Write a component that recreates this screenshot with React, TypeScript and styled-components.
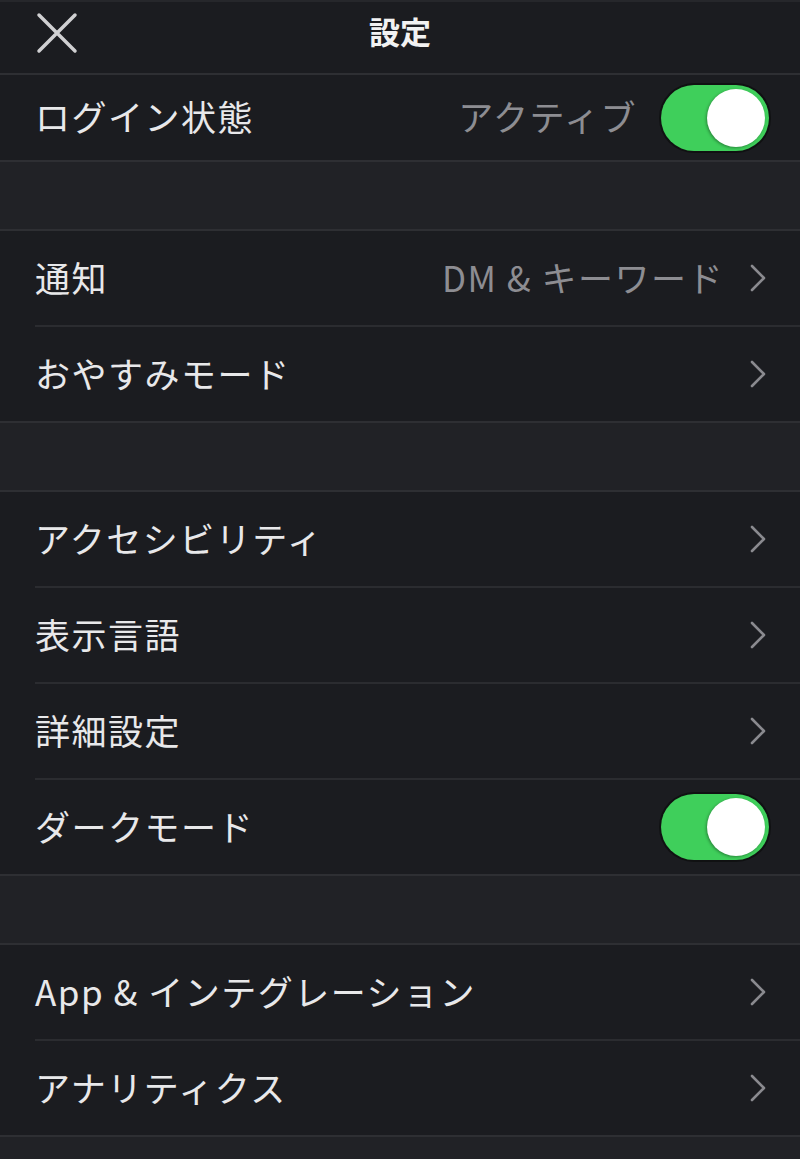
import styled, { createGlobalStyle } from "styled-components";

const GlobalStyle = createGlobalStyle`
  html, body {
    margin: 0;
    padding: 0;
    background: #212226;
  }
  body {
    font-family: "Noto Sans CJK JP", "Noto Sans", sans-serif;
    color: #e8e8ea;
  }
`;

const Screen = styled.div`
  width: 800px;
  height: 1159px;
  overflow: hidden;
  background: #212226;
`;

const Header = styled.header`
  position: relative;
  height: 75px;
  box-sizing: border-box;
  display: flex;
  align-items: center;
  justify-content: center;
  background: #1b1c20;
  border-top: 2px solid #26272b;
  border-bottom: 2px solid #2e2f33;
`;

const Title = styled.h1`
  margin: 0 0 14px;
  font-size: 31px;
  font-weight: 700;
  color: #f2f2f2;
`;

const CloseButton = styled.button`
  position: absolute;
  left: 36px;
  top: 10px;
  width: 42px;
  height: 42px;
  padding: 0;
  border: none;
  background: none;
  display: flex;
`;

const Group = styled.section`
  background: #1b1c20;
  border-bottom: 2px solid #2e2f33;
`;

const Spacer = styled.div`
  height: 67px;
  border-bottom: 2px solid #2e2f33;
`;

const Row = styled.div<{ $h?: number; $last?: boolean }>`
  height: ${(p) => p.$h ?? 94}px;
  margin-left: 35px;
  padding-right: 32px;
  display: flex;
  align-items: center;
  border-bottom: ${(p) => (p.$last ? "none" : "2px solid #2b2c30")};
`;

const Label = styled.span`
  flex: 1;
  font-size: 35px;
  letter-spacing: 1.5px;
  line-height: 1;
  margin-top: -4px;
`;

const Value = styled.span`
  font-size: 35px;
  letter-spacing: 1.5px;
  color: #8d8d92;
  line-height: 1;
  margin-top: -4px;
  margin-right: 24px;
`;

const Toggle = styled.span`
  position: relative;
  width: 108px;
  height: 66px;
  border-radius: 33px;
  background: #3fcf5b;
  box-shadow: 0 0 0 2px #101112;
  margin-right: -1px;
`;

const Knob = styled.span`
  position: absolute;
  right: 4px;
  top: 4px;
  width: 58px;
  height: 58px;
  border-radius: 50%;
  background: #ffffff;
  box-shadow: -1px 1px 3px rgba(0, 0, 0, 0.35);
`;

const Close = () => (
  <svg width="42" height="42" viewBox="0 0 42 42">
    <path d="M3 3 L39 39 M39 3 L3 39" stroke="#d0d0d2" strokeWidth="3.5" strokeLinecap="round" />
  </svg>
);

const Chevron = () => (
  <svg width="20" height="30" viewBox="0 0 20 30">
    <path d="M4 3 L16 15 L4 27" stroke="#8a8a8f" strokeWidth="2.6" fill="none" strokeLinecap="round" strokeLinejoin="round" />
  </svg>
);

const Switch = () => (
  <Toggle>
    <Knob />
  </Toggle>
);

type Item = { label: string; value?: string; toggle?: boolean };

const groups: Item[][] = [
  [
    { label: "通知", value: "DM & キーワード" },
    { label: "おやすみモード" },
  ],
  [
    { label: "アクセシビリティ" },
    { label: "表示言語" },
    { label: "詳細設定" },
    { label: "ダークモード", toggle: true },
  ],
  [
    { label: "App & インテグレーション" },
    { label: "アナリティクス" },
  ],
];

const App = () => (
  <>
    <GlobalStyle />
    <Screen>
      <Header>
        <CloseButton aria-label="閉じる">
          <Close />
        </CloseButton>
        <Title>設定</Title>
      </Header>
      <Group>
        <Row $h={85} $last>
          <Label>ログイン状態</Label>
          <Value>アクティブ</Value>
          <Switch />
        </Row>
      </Group>
      {groups.map((items, gi) => (
        <div key={gi}>
          <Spacer />
          <Group>
            {items.map((it, i) => (
              <Row key={it.label} $last={i === items.length - 1}>
                <Label>{it.label}</Label>
                {it.value && <Value>{it.value}</Value>}
                {it.toggle ? <Switch /> : <Chevron />}
              </Row>
            ))}
          </Group>
        </div>
      ))}
    </Screen>
  </>
);

export default App;
